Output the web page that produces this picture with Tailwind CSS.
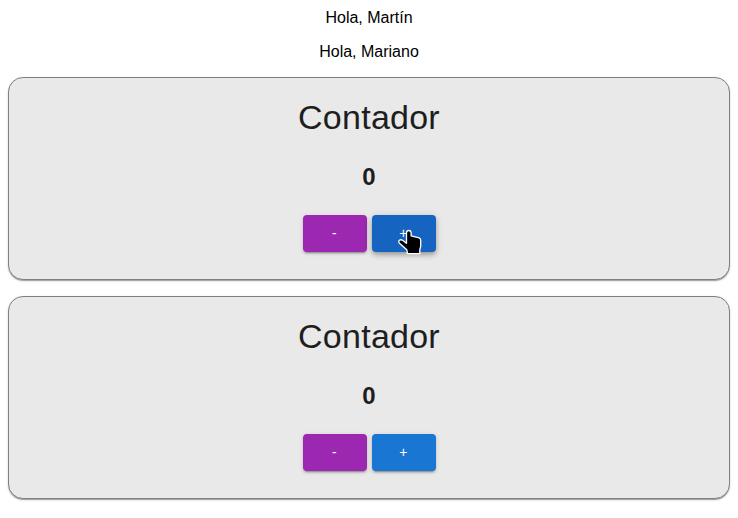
<!DOCTYPE html>
<html lang="es">
<head>
<meta charset="utf-8">
<title>Contador</title>
<script src="https://cdn.jsdelivr.net/npm/@tailwindcss/browser@4"></script>
</head>
<body class="bg-white px-2 pt-[9px] pb-2 font-['Liberation_Sans',Arial,sans-serif] text-base leading-[18px] text-black text-center">
<p>Hola, Martín</p>
<p class="mt-4">Hola, Mariano</p>
<main class="mt-4 flex flex-col gap-4">
<section class="flex h-[203px] flex-col items-center rounded-[15px] border border-[#808080] bg-[#e9e9e9] pt-[18px] text-[#1e1e1e] shadow-[0_2px_1px_-1px_rgba(0,0,0,0.2),0_1px_1px_0_rgba(0,0,0,0.14),0_1px_3px_0_rgba(0,0,0,0.12)]">
<h1 class="text-[34px] leading-[42px] tracking-[0.25px]">Contador</h1>
<h2 class="mt-[25px] text-2xl leading-7 font-bold">0</h2>
<div class="relative mt-6 flex gap-[5px] text-sm leading-[24.5px] tracking-[0.4px] text-white">
<button class="h-[37px] w-16 rounded-sm bg-[#9c27b0] shadow-[0_3px_1px_-2px_rgba(0,0,0,0.2),0_2px_2px_0_rgba(0,0,0,0.14),0_1px_5px_0_rgba(0,0,0,0.12)]">-</button>
<button class="h-[37px] w-16 rounded-sm bg-[#1565c0] shadow-[0_2px_4px_-1px_rgba(0,0,0,0.2),0_4px_5px_0_rgba(0,0,0,0.14),0_1px_10px_0_rgba(0,0,0,0.12)]">+</button>
<svg class="absolute top-[14px] left-[95px] h-[26px] w-6" viewBox="0 0 24 26"><path d="M8.5 3.8Q8.5 1.5 10.8 1.5Q13 1.5 13.1 3.8V6.8L21.2 8.8Q22.7 9.4 22.7 11.2V17.5L21.8 20.5V24.6H9.5L8.8 20.8L1.2 14Q.2 12.4 1.4 11.2Q2.8 10.3 4.5 11.3L8.5 14.3Z" fill="#000" stroke="#fff" stroke-width="1.3" stroke-linejoin="round"/></svg>
</div>
</section>
<section class="flex h-[203px] flex-col items-center rounded-[15px] border border-[#808080] bg-[#e9e9e9] pt-[18px] text-[#1e1e1e] shadow-[0_2px_1px_-1px_rgba(0,0,0,0.2),0_1px_1px_0_rgba(0,0,0,0.14),0_1px_3px_0_rgba(0,0,0,0.12)]">
<h1 class="text-[34px] leading-[42px] tracking-[0.25px]">Contador</h1>
<h2 class="mt-[25px] text-2xl leading-7 font-bold">0</h2>
<div class="mt-6 flex gap-[5px] text-sm leading-[24.5px] tracking-[0.4px] text-white">
<button class="h-[37px] w-16 rounded-sm bg-[#9c27b0] shadow-[0_3px_1px_-2px_rgba(0,0,0,0.2),0_2px_2px_0_rgba(0,0,0,0.14),0_1px_5px_0_rgba(0,0,0,0.12)]">-</button>
<button class="h-[37px] w-16 rounded-sm bg-[#1976d2] shadow-[0_3px_1px_-2px_rgba(0,0,0,0.2),0_2px_2px_0_rgba(0,0,0,0.14),0_1px_5px_0_rgba(0,0,0,0.12)]">+</button>
</div>
</section>
</main>
</body>
</html>
